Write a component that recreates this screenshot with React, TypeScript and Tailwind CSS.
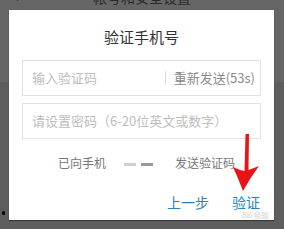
import React from "react";

export default function App() {
  const cjk = { fontFamily: '"Noto Sans CJK SC", "Noto Sans", sans-serif' };
  return (
    <div
      className="relative w-[284px] h-[229px] overflow-hidden bg-[#5e5e5e]"
      style={cjk}
    >
      <div className="absolute left-0 top-0 w-[284px] h-[82px] bg-[#666666]" />
      {/* clipped header of the page behind */}
      <div className="relative h-[10px] overflow-hidden">
        <div className="absolute left-[15px] top-[-10px] text-[13px] leading-[14px] text-[#222]">‹</div>
        <div className="absolute left-0 right-0 top-[-10px] text-center text-[14px] leading-[14px] text-[#2a2a2a]">
          帐号和安全设置
        </div>
      </div>
      {/* dialog */}
      <div className="relative ml-[9px] w-[265px] h-[210px] bg-white shadow-[0_1px_1px_rgba(0,0,0,0.4)] flex flex-col px-[13px]">
        <div className="pt-[17px] h-[37px] text-center text-[15px] leading-[20px] text-[#333]">
          验证手机号
        </div>
        <div className="mt-[13px] h-[36px] border border-[#e2e2e2] flex items-center pl-[9px] pr-[5px]">
          <span className="flex-1 text-[13px] text-[#bdbdbd]">输入验证码</span>
          <span className="w-px h-[14px] bg-[#dcdcdc] mr-[8px]" />
          <span className="text-[13px] text-[#8a8a8a]">重新发送(53s)</span>
        </div>
        <div className="mt-[7px] h-[36px] border border-[#e2e2e2] flex items-center pl-[9px]">
          <span className="text-[13px] text-[#bdbdbd] whitespace-nowrap">请设置密码（6-20位英文或数字）</span>
        </div>
        <div className="mt-[14px] h-[20px] flex items-center pl-[36px] text-[12px] text-[#777]">
          <span>已向手机</span>
          <span className="ml-[18px] mt-[3px] w-[12px] h-[3px] bg-[#cfcfcf]" />
          <span className="ml-[5px] mt-[3px] w-[12px] h-[3px] bg-[#9a9a9a]" />
          <span className="ml-[22px]">发送验证码</span>
        </div>
        <div className="mt-[19px] h-[20px] flex items-center justify-end gap-[23px] pr-[1px] text-[14px] text-[#2b7fc0]">
          <span>上一步</span>
          <span>验证</span>
        </div>
        <div className="absolute right-[4px] bottom-[0px] text-[7px] leading-[9px] text-[#d8d8d8] bg-[#f8f8f8] px-[2px]">
          Bai 经验
        </div>
      </div>
      <div className="absolute left-[2px] top-[211px] w-[3px] h-[4px] bg-black rounded-full" />
      {/* red arrow */}
      <svg
        className="absolute left-[228px] top-[130px]"
        width="34"
        height="64"
        viewBox="0 0 34 64"
      >
        <path
          d="M17.5 4 L21 4 L20.5 40 Q26 38 31 36 Q22 48 15 61 Q10 48 5 37 Q11 40 16.5 41 Z"
          fill="#e8141a"
        />
      </svg>
    </div>
  );
}
